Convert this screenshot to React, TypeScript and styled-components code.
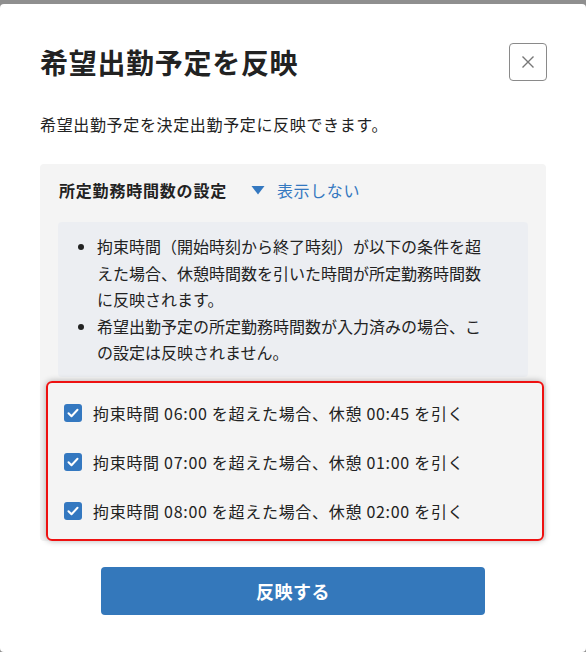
import { useState } from "react";
import styled, { createGlobalStyle } from "styled-components";

const GlobalStyle = createGlobalStyle`
  html, body {
    margin: 0;
    padding: 0;
    background: #8f8f8f;
  }
  body {
    font-family: "Noto Sans CJK JP", "Noto Sans", sans-serif;
    color: #222;
  }
`;

const Modal = styled.div`
  box-sizing: border-box;
  margin-top: 4px;
  height: 648px;
  background: #fff;
  border-radius: 4px;
  padding: 38px 39px 0 40px;
`;

const Header = styled.div`
  display: flex;
  align-items: center;
  justify-content: space-between;
`;

const Title = styled.h1`
  margin: 0;
  font-size: 28px;
  font-weight: 700;
  line-height: 40px;
  letter-spacing: 0.7px;
  color: #222;
`;

const CloseButton = styled.button`
  width: 38px;
  height: 38px;
  padding: 0;
  display: flex;
  align-items: center;
  justify-content: center;
  background: #fff;
  border: 1px solid #8a8a8a;
  border-radius: 4px;
  cursor: pointer;
`;

const Description = styled.p`
  margin: 30px 0 0;
  font-size: 16px;
  line-height: 24px;
  letter-spacing: 0.65px;
  color: #222;
`;

const Panel = styled.section`
  margin: 28px 1px 0 0;
  background: #f4f4f4;
  border-radius: 4px;
  padding: 14px 18px 0 19px;
`;

const PanelHead = styled.div`
  display: flex;
  align-items: center;
  height: 24px;
`;

const PanelTitle = styled.h2`
  margin: 0;
  font-size: 16px;
  font-weight: 700;
  line-height: 24px;
  letter-spacing: 0.8px;
`;

const Toggle = styled.button`
  margin-left: 24px;
  display: flex;
  align-items: center;
  gap: 12px;
  padding: 0;
  border: none;
  background: none;
  font: inherit;
  font-size: 16px;
  line-height: 24px;
  letter-spacing: 0.6px;
  color: #3478c0;
  cursor: pointer;
`;

const Notes = styled.ul`
  margin: 20px 0 0 -1px;
  padding: 11px 40px 11px 39px;
  background: #eceef2;
  border-radius: 4px;
  font-size: 16px;
  line-height: 26.5px;
  color: #222;
`;

const Note = styled.li`
  padding-left: 0;
`;

const Highlight = styled.div`
  margin: 4px -16px 0 -13px;
  border: 2px solid #ee1111;
  border-radius: 6px;
  box-shadow: 0 0 6px rgba(0, 0, 0, 0.3);
  padding: 18px 16px 16px;
  display: flex;
  flex-direction: column;
  gap: 25px;
`;

const Row = styled.label`
  display: flex;
  align-items: center;
  gap: 11px;
  font-size: 16px;
  line-height: 24px;
  letter-spacing: 0.7px;
  color: #222;
  cursor: pointer;
`;

const Box = styled.span<{ $on: boolean }>`
  width: 18px;
  height: 18px;
  border-radius: 3px;
  flex: none;
  display: flex;
  align-items: center;
  justify-content: center;
  background: ${(p) => (p.$on ? "#3478c0" : "#fff")};
  border: ${(p) => (p.$on ? "none" : "1px solid #888")};
  box-sizing: border-box;
`;

const Footer = styled.div`
  display: flex;
  justify-content: center;
  margin-top: 26px;
  padding-right: 1px;
`;

const Submit = styled.button`
  width: 384px;
  height: 48px;
  border: none;
  border-radius: 4px;
  background: #3478bb;
  color: #fff;
  font: inherit;
  font-size: 18px;
  font-weight: 700;
  letter-spacing: 0.5px;
  cursor: pointer;
`;

const rules = [
  { over: "06:00", rest: "00:45" },
  { over: "07:00", rest: "01:00" },
  { over: "08:00", rest: "02:00" },
];

const App = () => {
  const [checked, setChecked] = useState([true, true, true]);

  const flip = (i: number) =>
    setChecked((c) => c.map((v, j) => (j === i ? !v : v)));

  return (
    <>
      <GlobalStyle />
      <Modal>
        <Header>
          <Title>希望出勤予定を反映</Title>
          <CloseButton aria-label="閉じる">
            <svg width="14" height="14" viewBox="0 0 14 14">
              <path d="M1.5 1.5l11 11M12.5 1.5l-11 11" stroke="#777" strokeWidth="1.4" />
            </svg>
          </CloseButton>
        </Header>
        <Description>希望出勤予定を決定出勤予定に反映できます。</Description>
        <Panel>
          <PanelHead>
            <PanelTitle>所定勤務時間数の設定</PanelTitle>
            <Toggle>
              <svg width="14" height="10" viewBox="0 0 14 10">
                <path d="M0.5 1h13L7 9.5z" fill="#3478c0" />
              </svg>
              表示しない
            </Toggle>
          </PanelHead>
          <Notes>
            <Note>拘束時間（開始時刻から終了時刻）が以下の条件を超えた場合、休憩時間数を引いた時間が所定勤務時間数に反映されます。</Note>
            <Note>希望出勤予定の所定勤務時間数が入力済みの場合、この設定は反映されません。</Note>
          </Notes>
          <Highlight>
            {rules.map((r, i) => (
              <Row key={r.over} onClick={() => flip(i)}>
                <Box $on={checked[i]}>
                  {checked[i] && (
                    <svg width="12" height="10" viewBox="0 0 12 10">
                      <path d="M1.5 5.2l3 3 6-6.4" stroke="#fff" strokeWidth="2" fill="none" strokeLinecap="round" strokeLinejoin="round" />
                    </svg>
                  )}
                </Box>
                拘束時間 {r.over} を超えた場合、休憩 {r.rest} を引く
              </Row>
            ))}
          </Highlight>
        </Panel>
        <Footer>
          <Submit>反映する</Submit>
        </Footer>
      </Modal>
    </>
  );
};

export default App;
